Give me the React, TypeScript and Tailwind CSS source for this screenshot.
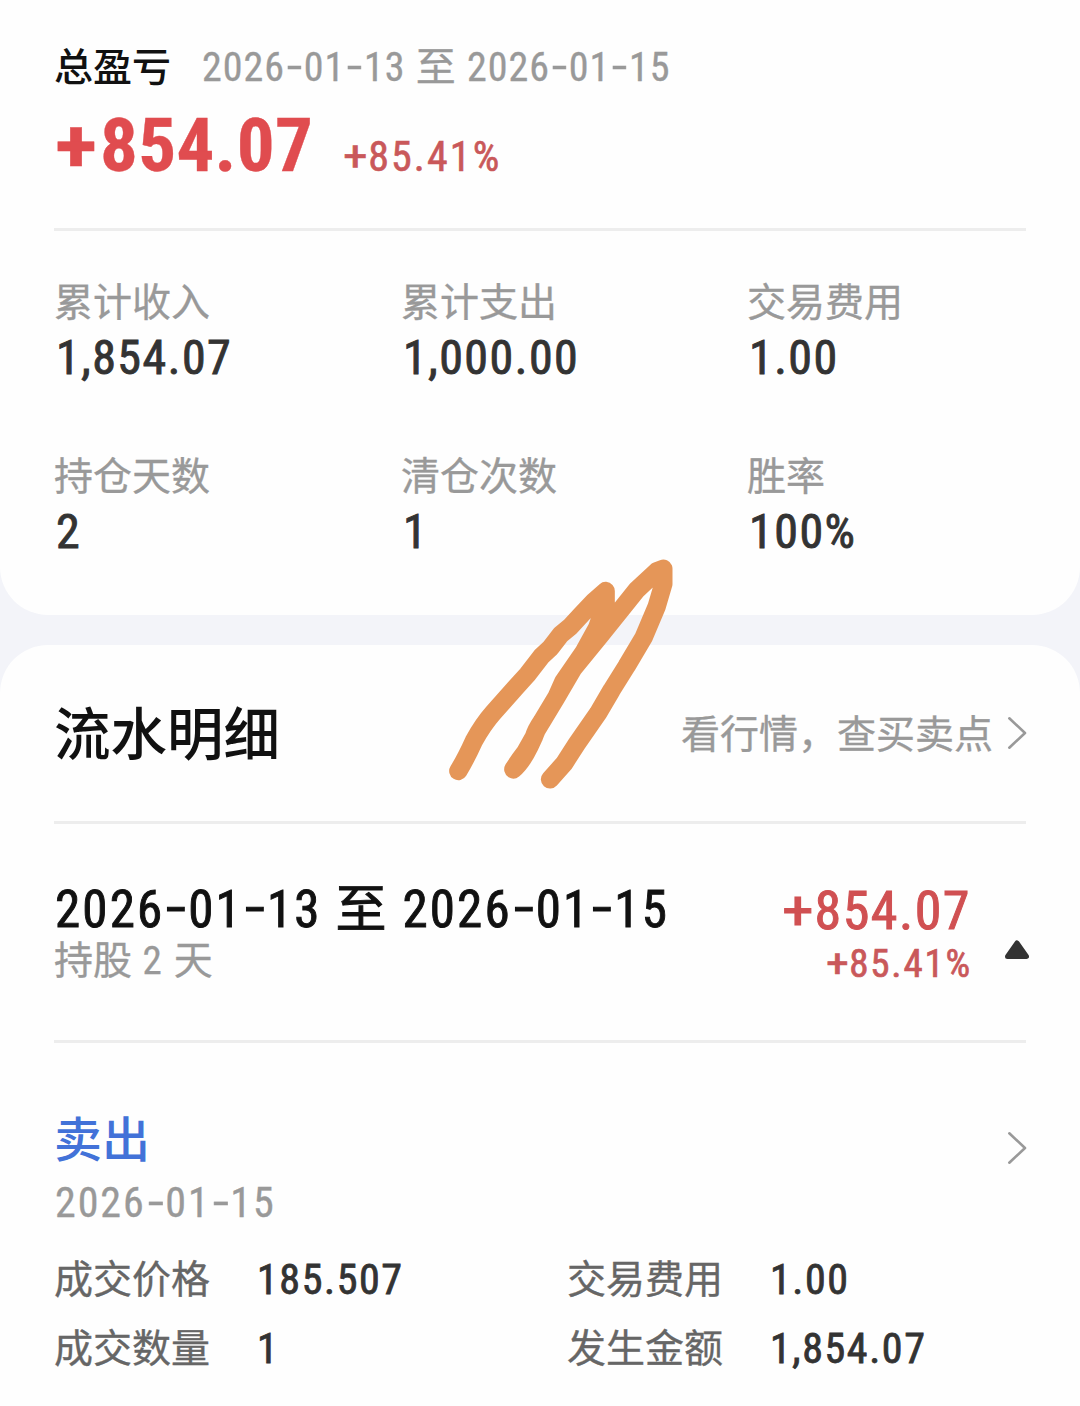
import React from 'react';
import clsx from 'clsx';

type NumProps = { children: string; className?: string };

// Condensed digits used for every amount and date, with wider plus and hyphen cells
const Num: React.FC<NumProps> = ({ children, className }) => (
  <span
    className={clsx(
      "inline-block whitespace-pre font-['Roboto_Condensed','Roboto','Noto_Sans_CJK_SC',sans-serif] [font-stretch:75%]",
      className,
    )}
  >
    {children.split(/([+-])/).map((part, i) => {
      if (part === '-') {
        return (
          <span
            key={i}
            className="inline-block w-[0.47em] -translate-y-[0.03em] scale-x-[1.6] text-center tracking-normal"
          >
            -
          </span>
        );
      }
      if (part === '+') {
        return (
          <span key={i} className="inline-block w-[0.6em] origin-left scale-x-[1.18] tracking-normal">
            +
          </span>
        );
      }
      return part;
    })}
  </span>
);

const Chevron: React.FC = () => (
  <svg width="20" height="34" viewBox="0 0 20 34" fill="none" className="-mr-px shrink-0">
    <path d="M2.3 2.3L18 17L2.3 31.7" stroke="#999" strokeWidth="2.6" strokeLinecap="round" strokeLinejoin="round" />
  </svg>
);

const Divider: React.FC = () => <div className="h-[3px] bg-[#ededed]" />;

const stats = [
  { label: '累计收入', value: '1,854.07' },
  { label: '累计支出', value: '1,000.00' },
  { label: '交易费用', value: '1.00' },
  { label: '持仓天数', value: '2' },
  { label: '清仓次数', value: '1' },
  { label: '胜率', value: '100%' },
];

const details = [
  { label: '成交价格', value: '185.507' },
  { label: '交易费用', value: '1.00' },
  { label: '成交数量', value: '1' },
  { label: '发生金额', value: '1,854.07' },
];

const App: React.FC = () => {
  return (
    <div className="relative h-[1406px] w-[1080px] overflow-hidden bg-[#f3f4f9] font-['Noto_Sans_CJK_SC',sans-serif] text-[#333] [-webkit-text-stroke:0.35px]">
      {/* Summary */}
      <section className="h-[615px] rounded-b-[48px] bg-[#fefefe] px-[54px] pt-[43px]">
        <div className="flex h-12 items-center leading-none">
          <h2 className="w-[148px] pb-[5px] text-[39px] font-medium text-[#111] [-webkit-text-stroke:0]">总盈亏</h2>
          <Num className="pt-[2px] text-[40px] tracking-[1px] text-[#999]">2026-01-13 至 2026-01-15</Num>
        </div>
        <div className="flex h-[137px] items-baseline leading-[109px] text-[#e04c4f]">
          <Num className="w-[289px] pl-px text-[75px] font-bold tracking-[0.3px]">+854.07</Num>
          <Num className="text-[42px] tracking-[2.1px] text-[#c9585a] [-webkit-text-stroke:0.6px]">+85.41%</Num>
        </div>
        <Divider />
        <div className="grid grid-cols-[347px_346px_1fr] pt-[42px]">
          {stats.map((item) => (
            <div key={item.label} className="h-[174px]">
              <p className="flex h-14 items-center pb-1 text-[39px] leading-none text-[#999]">{item.label}</p>
              <Num className="pl-[2px] text-[48px] leading-[57px] tracking-[1.5px] [-webkit-text-stroke:0.9px]">
                {item.value}
              </Num>
            </div>
          ))}
        </div>
      </section>

      {/* Records */}
      <section className="mt-[30px] h-[761px] rounded-t-[48px] bg-[#fefefe] px-[54px]">
        <div className="flex h-44 items-center justify-between leading-none">
          <h1 className="pb-[6px] text-[56.5px] font-medium text-[#111] [-webkit-text-stroke:0]">流水明细</h1>
          <div className="flex items-center gap-[14px] text-[39px] text-[#999]">
            <span className="pb-1">看行情，查买卖点</span>
            <Chevron />
          </div>
        </div>
        <Divider />
        <div className="flex h-[216px] pt-[60px]">
          <div className="grow">
            <Num className="block pl-px text-[51px] leading-[52px] tracking-[2.15px] text-[#111] [-webkit-text-stroke:0.9px]">
              2026-01-13 至 2026-01-15
            </Num>
            <div className="text-[39px] leading-[43px] text-[#999]">
              持股<Num className="leading-none tracking-[1.5px]"> 2 </Num>天
            </div>
          </div>
          <div className="flex flex-col items-end text-[#d05052]">
            <Num className="-mr-px text-[54px] leading-[54px] tracking-[1.5px] [-webkit-text-stroke:1px]">+854.07</Num>
            <Num className="-mr-[2px] text-[39px] leading-[52px] tracking-[1.8px] text-[#c9585a] [-webkit-text-stroke:0.7px]">
              +85.41%
            </Num>
          </div>
          <svg width="24" height="20" viewBox="0 0 24 20" className="mt-[56px] mr-[-3px] ml-[35px] shrink-0">
            <path d="M12 3L21.5 16.5H2.5Z" fill="#333" stroke="#333" strokeWidth="5" strokeLinejoin="round" />
          </svg>
        </div>
        <Divider />
        <div className="flex items-start justify-between pt-[67px] leading-none">
          <div>
            <p className="h-[60px] text-[48px] leading-[53px] font-medium text-[#4272d8] [-webkit-text-stroke:0]">卖出</p>
            <Num className="block pl-px text-[42px] leading-[66px] tracking-[1.9px] text-[#999]">2026-01-15</Num>
          </div>
          <div className="pt-[21px]">
            <Chevron />
          </div>
        </div>
        <div className="grid grid-cols-[513px_1fr] pt-[8px]">
          {details.map((item) => (
            <div key={item.label} className="flex h-[69px] items-center leading-none">
              <span className="w-[203px] pb-1 text-[39px] text-[#666]">{item.label}</span>
              <Num className="pt-[2px] text-[42px] tracking-[1.6px] [-webkit-text-stroke:0.8px]">{item.value}</Num>
            </div>
          ))}
        </div>
      </section>

      {/* Marker scribble */}
      <svg
        className="pointer-events-none absolute top-[540px] left-[430px]"
        width="270"
        height="270"
        viewBox="0 0 810 810"
        fill="none"
      >
        <path
          d="M85 693Q108 655 132 602Q160 552 190 518L262 437L292 404L336 347L362 323L392 284L422 259L458 220L492 184L527 153L527 190L502 262L462 335L400 425L380 470L335 545Q318 570 312 590L285 638Q262 668 250 688Q285 660 320 570L378 474L430 385L512 285L584 195L620 150L680 94L700 86L700 132L680 200L641 292L590 378L545 450L504 520L440 612L402 671L360 718"
          stroke="#e59658"
          strokeWidth="55"
          strokeLinecap="round"
          strokeLinejoin="round"
        />
      </svg>
    </div>
  );
};

export default App;
